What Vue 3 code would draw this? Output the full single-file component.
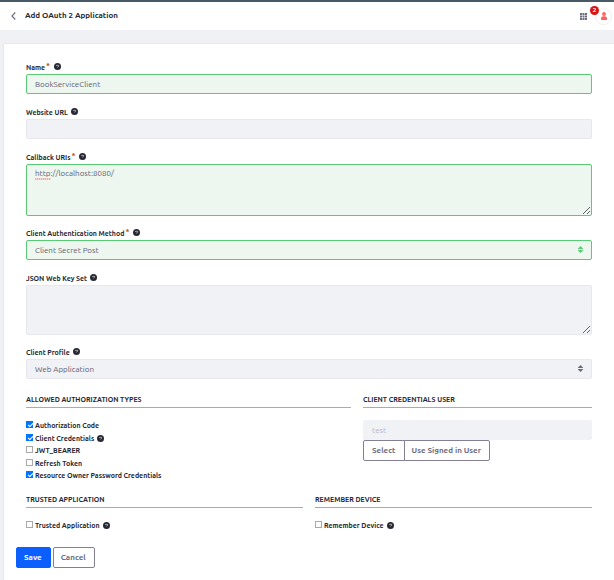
<script setup>
import { ref, h } from 'vue'

const form = ref({
  name: 'BookServiceClient',
  website: '',
  callback: 'http://localhost:8080/',
  authMethod: 'Client Secret Post',
  jwks: '',
  profile: 'Web Application',
  user: 'test',
  trusted: false,
  remember: false
})

const grants = ref([
  { id: 'code', label: 'Authorization Code', checked: true },
  { id: 'credentials', label: 'Client Credentials', checked: true, help: true },
  { id: 'jwt', label: 'JWT_BEARER', checked: false },
  { id: 'refresh', label: 'Refresh Token', checked: false },
  { id: 'password', label: 'Resource Owner Password Credentials', checked: true }
])

// question mark in a dark circle, shown after labels
const HelpIcon = () =>
  h('svg', { viewBox: '0 0 14 14', width: 7, height: 7, 'aria-hidden': 'true' }, [
    h('circle', { cx: 7, cy: 7, r: 7, fill: '#272833' }),
    h('path', {
      d: 'M4 5.6C4.6 4.4 9.6 4.2 10 5.8C9.8 7 7 6.8 7 8.6',
      fill: 'none',
      stroke: '#fff',
      'stroke-width': 1.2
    })
  ])
</script>

<template>
  <div class="page">
    <header class="navbar">
      <a class="back" href="#" aria-label="Back">
        <svg viewBox="0 0 5 8" width="5" height="8">
          <path d="M4.3 0.5L0.9 4L4.3 7.5" fill="none" stroke="#6b6c7e" stroke-width="1.1" />
        </svg>
      </a>
      <h1>Add OAuth 2 Application</h1>
      <button class="apps" type="button" aria-label="Applications">
        <svg viewBox="0 0 7 7" width="7" height="7" fill="#6b6c7e">
          <path d="M0 0h2v2H0zM2.5 0h2v2h-2zM5 0h2v2H5zM0 2.5h2v2H0zM2.5 2.5h2v2h-2zM5 2.5h2v2H5zM0 5h2v2H0zM2.5 5h2v2h-2zM5 5h2v2H5z" />
        </svg>
      </button>
      <button class="avatar" type="button" aria-label="User">
        <svg viewBox="0 0 6 8" width="6" height="8" fill="#ff5f5f">
          <circle cx="3" cy="2" r="1.9" />
          <path d="M0 6.2C0 4.6 1.4 4.2 3 4.2S6 4.6 6 6.2V7C6 7.6 5.6 8 5 8H1C0.4 8 0 7.6 0 7z" />
        </svg>
        <span class="badge">2</span>
      </button>
    </header>

    <form class="sheet" @submit.prevent>
      <div class="fields">
        <div class="field">
          <label for="name">Name<sup>*</sup><HelpIcon class="help" /></label>
          <input id="name" v-model="form.name" class="control valid" type="text">
        </div>
        <div class="field">
          <label for="website">Website URL<HelpIcon class="help" /></label>
          <input id="website" v-model="form.website" class="control" type="text">
        </div>
        <div class="field area">
          <label for="callback">Callback URIs<sup>*</sup><HelpIcon class="help" /></label>
          <div class="spell">
            <textarea id="callback" v-model="form.callback" class="control valid tall" spellcheck="false"></textarea>
            <i class="squiggle"></i>
          </div>
        </div>
        <div class="field">
          <label for="auth">Client Authentication Method<sup>*</sup><HelpIcon class="help" /></label>
          <div class="select">
            <select id="auth" v-model="form.authMethod" class="control valid">
              <option>Client Secret Post</option>
            </select>
            <svg class="caret" viewBox="0 0 5 7" width="5" height="7" fill="#5aca75">
              <path d="M0 3V2.4L2.5 0L5 2.4V3zM0 4V4.6L2.5 7L5 4.6V4z" />
            </svg>
          </div>
        </div>
        <div class="field area">
          <label for="jwks">JSON Web Key Set<HelpIcon class="help" /></label>
          <textarea id="jwks" v-model="form.jwks" class="control"></textarea>
        </div>
        <div class="field">
          <label for="profile">Client Profile<HelpIcon class="help" /></label>
          <div class="select">
            <select id="profile" v-model="form.profile" class="control">
              <option>Web Application</option>
            </select>
            <svg class="caret" viewBox="0 0 5 7" width="5" height="7" fill="#6b6c7e">
              <path d="M0 3V2.4L2.5 0L5 2.4V3zM0 4V4.6L2.5 7L5 4.6V4z" />
            </svg>
          </div>
        </div>

        <div class="row wide">
          <section>
            <h2>Allowed Authorization Types</h2>
            <label v-for="grant in grants" :key="grant.id" class="check">
              <input v-model="grant.checked" type="checkbox">
              {{ grant.label }}<HelpIcon v-if="grant.help" class="help" />
            </label>
          </section>
          <section>
            <h2><label for="user">Client Credentials User</label></h2>
            <input id="user" v-model="form.user" class="control" type="text" disabled>
            <div class="group">
              <button class="btn" type="button">Select</button>
              <button class="btn" type="button">Use Signed in User</button>
            </div>
          </section>
        </div>

        <div class="row">
          <section>
            <h2>Trusted Application</h2>
            <label class="check">
              <input v-model="form.trusted" type="checkbox">
              Trusted Application<HelpIcon class="help" />
            </label>
          </section>
          <section>
            <h2>Remember Device</h2>
            <label class="check">
              <input v-model="form.remember" type="checkbox">
              Remember Device<HelpIcon class="help" />
            </label>
          </section>
        </div>
      </div>

      <div class="actions">
        <button class="btn primary" type="submit">Save</button>
        <button class="btn" type="button">Cancel</button>
      </div>
    </form>
  </div>
</template>

<style>
body {
  background: #f0f1f5;
}
</style>

<style scoped>
.page {
  min-height: 100vh;
  display: flex;
  flex-direction: column;
  font-family: Ubuntu, "Noto Sans", "Open Sans", sans-serif;
  font-size: 7px;
  color: #272833;
}

.page * {
  box-sizing: border-box;
}

.navbar {
  display: flex;
  align-items: center;
  height: 30px;
  padding: 0 2px 0 11px;
  border-top: 2px solid #485a66;
  background: #fff;
}

.back {
  display: flex;
  width: 14px;
}

h1 {
  flex: 1;
  margin: 0;
  font-size: 8px;
  line-height: 12px;
  font-weight: 600;
}

.apps,
.avatar {
  display: flex;
  align-items: center;
  justify-content: center;
  padding: 0;
  border: 0;
  background: none;
}

.apps {
  margin-right: 8px;
}

.avatar {
  position: relative;
  width: 17px;
  height: 17px;
  border: 1px solid #eeeef2;
  border-radius: 50%;
}

.badge {
  position: absolute;
  top: -3px;
  left: -6px;
  width: 9px;
  height: 9px;
  border-radius: 50%;
  background: #da1414;
  color: #fff;
  font-family: "Noto Sans", sans-serif;
  font-size: 6px;
  line-height: 9px;
  font-weight: 600;
  text-align: center;
}

.sheet {
  flex: 1;
  margin: 13px 0 0 3px;
  padding: 18px 22px 12px 12px;
  border: 1px solid #e7e7ed;
  border-width: 1px 0 0 1px;
  border-radius: 2px 0 0 0;
  background: #fff;
}

.fields {
  padding-left: 10px;
}

.field {
  margin-bottom: 13px;
}

.field.area {
  margin-bottom: 12px;
}

.field label {
  display: flex;
  align-items: center;
  height: 10px;
  margin-bottom: 2px;
  line-height: 10px;
  font-weight: 600;
}

sup {
  align-self: flex-start;
  margin: 0 1px;
  color: #b95000;
  font-size: 8px;
  line-height: 8px;
}

.help {
  flex: none;
  margin: 0 0 1px 3px;
}

.control {
  display: block;
  width: 100%;
  height: 20px;
  margin: 0;
  padding: 0 8px;
  border: 1px solid #e7e7ed;
  border-radius: 2px;
  background: #f1f2f5;
  color: #5f6073;
  font-family: inherit;
  font-size: 8px;
  line-height: 12px;
  appearance: none;
}

select.control {
  padding-top: 1px;
}

textarea.control {
  height: 50px;
  padding: 3px 8px;
  resize: vertical;
}

textarea.tall {
  height: 52px;
}

.control.valid {
  border-color: #5aca75;
  background: #edf7ef;
}

.control:disabled {
  border-color: #f1f2f5;
  color: #b5b6cb;
}

.spell,
.select {
  position: relative;
}

/* spelling mark below the protocol */
.squiggle {
  position: absolute;
  top: 14px;
  left: 9px;
  width: 16px;
  height: 2px;
  background: repeating-linear-gradient(90deg, #f3aaa6 0 1px, #f8d5d0 1px 2px);
}

.caret {
  position: absolute;
  top: 6px;
  right: 9px;
  pointer-events: none;
}

.row {
  display: grid;
  grid-template-columns: 1fr 1fr;
  gap: 12px;
  margin-top: 11px;
}

.row.wide {
  grid-template-columns: 325fr 229fr;
  margin-top: 15px;
}

h2 {
  margin: 0 0 12px;
  padding-bottom: 3px;
  border-bottom: 1px solid #a7a9bc;
  font-size: 7px;
  line-height: 10px;
  font-weight: 600;
  text-transform: uppercase;
}

.check {
  display: flex;
  align-items: center;
  height: 11px;
  margin-bottom: 1px;
  line-height: 11px;
  font-weight: 600;
}

.check:nth-child(even) {
  margin-bottom: 2px;
}

.check input {
  position: relative;
  width: 7px;
  height: 7px;
  margin: 0 2px 2px 0;
  border: 1px solid #a9a9a9;
  background: #fff;
  appearance: none;
}

.check input:checked {
  border-color: #0075ff;
  background: #0075ff;
}

/* tick */
.check input:checked::after {
  content: "";
  position: absolute;
  top: 0;
  left: 2px;
  width: 2px;
  height: 4px;
  border: solid #fff;
  border-width: 0 1px 1px 0;
  transform: rotate(45deg);
}

.group {
  display: flex;
}

.btn {
  height: 21px;
  padding: 0 8px 0 7px;
  border: 1px solid #857f94;
  border-radius: 2px;
  background: #fff;
  color: #6b6c7e;
  font-family: inherit;
  font-size: 8px;
  line-height: 12px;
  font-weight: 600;
}

.group .btn:first-child {
  padding-left: 8px;
  border-radius: 2px 0 0 2px;
}

.group .btn:last-child {
  margin-left: -1px;
  border-radius: 0 2px 2px 0;
}

.btn.primary {
  border-color: #0b5fff;
  background: #0b5fff;
  color: #fff;
}

.actions {
  display: flex;
  gap: 2px;
  margin-top: 14px;
}
</style>
